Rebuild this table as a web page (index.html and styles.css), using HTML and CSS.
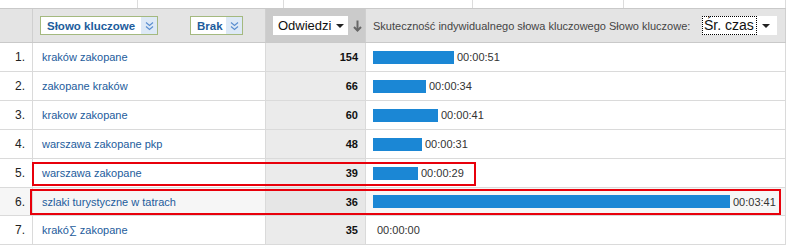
FILE: index.html
```html
<!DOCTYPE html>
<html lang="pl">
<head>
<meta charset="utf-8">
<link rel="stylesheet" href="styles.css">
</head>
<body>
<div class="wrap">
  <div class="topband">
    <div class="tb tb1"></div><div class="tb tb2"></div><div class="tb tb3"></div><div class="tb tb4"></div><div class="tb tb5"></div>
  </div>
  <div class="row head">
    <div class="cell num"></div>
    <div class="cell kw">
      <div class="dim dim1"><span class="dim-label">Słowo kluczowe</span><span class="dim-btn"><svg width="9" height="10" viewBox="0 0 9 10"><polyline points="1,1.5 4.5,4.5 8,1.5" fill="none" stroke="#5b8fd0" stroke-width="1.2"/><polyline points="1,5.5 4.5,8.5 8,5.5" fill="none" stroke="#5b8fd0" stroke-width="1.2"/></svg></span></div>
      <div class="dim dim2"><span class="dim-label">Brak</span><span class="dim-btn"><svg width="9" height="10" viewBox="0 0 9 10"><polyline points="1,1.5 4.5,4.5 8,1.5" fill="none" stroke="#5b8fd0" stroke-width="1.2"/><polyline points="1,5.5 4.5,8.5 8,5.5" fill="none" stroke="#5b8fd0" stroke-width="1.2"/></svg></span></div>
    </div>
    <div class="cell vis">
      <div class="sel sel-vis"><span>Odwiedzi</span><span class="caret"></span></div>
      <svg class="sortarrow" width="9" height="12" viewBox="0 0 9 12"><line x1="4.5" y1="0.5" x2="4.5" y2="10.5" stroke="#666" stroke-width="2"/><polyline points="1,7 4.5,10.5 8,7" fill="none" stroke="#666" stroke-width="2"/></svg>
    </div>
    <div class="cell met">
      <span class="met-title">Skuteczność indywidualnego słowa kluczowego Słowo kluczowe:</span>
      <div class="sel sel-met"><span class="focus">Śr. czas</span><span class="caret"></span></div>
    </div>
  </div>

  <div class="row">
    <div class="cell num">1.</div>
    <div class="cell kw"><a class="link">kraków zakopane</a></div>
    <div class="cell vis val">154</div>
    <div class="cell met"><span class="bar" style="width:81px"></span><span class="time">00:00:51</span></div>
  </div>
  <div class="row">
    <div class="cell num">2.</div>
    <div class="cell kw"><a class="link">zakopane kraków</a></div>
    <div class="cell vis val">66</div>
    <div class="cell met"><span class="bar" style="width:53px"></span><span class="time">00:00:34</span></div>
  </div>
  <div class="row">
    <div class="cell num">3.</div>
    <div class="cell kw"><a class="link">krakow zakopane</a></div>
    <div class="cell vis val">60</div>
    <div class="cell met"><span class="bar" style="width:65px"></span><span class="time">00:00:41</span></div>
  </div>
  <div class="row">
    <div class="cell num">4.</div>
    <div class="cell kw"><a class="link">warszawa zakopane pkp</a></div>
    <div class="cell vis val">48</div>
    <div class="cell met"><span class="bar" style="width:49px"></span><span class="time">00:00:31</span></div>
  </div>
  <div class="row">
    <div class="cell num">5.</div>
    <div class="cell kw"><a class="link">warszawa zakopane</a></div>
    <div class="cell vis val">39</div>
    <div class="cell met"><span class="bar" style="width:45px"></span><span class="time">00:00:29</span></div>
  </div>
  <div class="row hover short">
    <div class="cell num">6.</div>
    <div class="cell kw"><a class="link">szlaki turystyczne w tatrach</a></div>
    <div class="cell vis val">36</div>
    <div class="cell met"><span class="bar" style="width:357px"></span><span class="time">00:03:41</span></div>
  </div>
  <div class="row">
    <div class="cell num">7.</div>
    <div class="cell kw"><a class="link">krakó∑ zakopane</a></div>
    <div class="cell vis val">35</div>
    <div class="cell met"><span class="time nobar">00:00:00</span></div>
  </div>

  <div class="mark mark5"></div>
  <div class="mark mark6"></div>
</div>
</body>
</html>
```

FILE: styles.css
```css
* { box-sizing: border-box; }
html, body { margin: 0; padding: 0; background: #fff; }
body { font-family: Arial, "Liberation Sans", sans-serif; font-size: 11px; color: #222; }

.wrap { position: relative; width: 793px; height: 246px; overflow: hidden; }

.topband { display: flex; height: 8px; }
.tb { height: 8px; border-right: 1px solid #dcdcdc; }
.tb1 { width: 138px; }
.tb2 { width: 146px; }
.tb3 { width: 189px; }
.tb4 { width: 151px; }
.tb5 { width: 162px; }

.row {
  display: grid;
  grid-template-columns: 33px 233px 100px 420px;
  width: 786px;
  height: 29px;
  border-bottom: 1px solid #dadada;
}
.row.short { height: 28px; }
.row.head { height: 35px; border-top: 1px solid #c9c9c9; border-bottom: 1px solid #c9c9c9; background: #e4e4e4; }

.cell { border-right: 1px solid #dadada; display: flex; align-items: center; min-width: 0; white-space: nowrap; }
.head .cell { border-right-color: #cfcfcf; }

.num { justify-content: flex-end; padding-right: 7px; font-size: 12px; color: #222; }
.kw { padding-left: 9px; }
.link { color: #1d5c9c; font-size: 11px; text-decoration: none; }
.vis { background: #ebebeb; }
.val { justify-content: flex-end; padding-right: 7px; font-weight: bold; color: #111; }
.met { padding-left: 7px; }
.hover .cell { background: #f6f6f6; }
.hover .vis { background: #e6e6e6; }

.bar { display: inline-block; height: 13px; background: #1b87d5; flex: none; }
.time { margin-left: 3px; color: #333; font-size: 11px; }
.time.nobar { margin-left: 4px; }

/* header */
.head .kw { padding-left: 7px; }
.dim { display: flex; align-items: stretch; height: 19px; border: 1px solid #a4b97f; background: #fff; }
.dim1 { width: 118px; }
.dim2 { width: 53px; margin-left: 32px; }
.dim-label { flex: 1; display: flex; align-items: center; padding-left: 6px; font-weight: bold; color: #1d5c9c; font-size: 11.5px; }
.dim-btn { width: 16px; background: #dde9f6; display: flex; align-items: center; justify-content: center; }

.head .vis { background: #cbcbcb; padding-left: 7px; }
.sel { display: flex; align-items: center; background: #fff; height: 19px; }
.sel-vis { width: 75px; padding-left: 5px; font-size: 13px; color: #111; }
.caret { width: 0; height: 0; border-left: 4px solid transparent; border-right: 4px solid transparent; border-top: 4px solid #222; margin-left: 5px; }
.sortarrow { margin-left: 5px; }

.met-title { color: #444; font-size: 11px; }
.sel-met { margin-left: auto; margin-right: 8px; width: 75px; padding-left: 1px; font-size: 14px; color: #111; }
.sel-met .focus { outline: 1px dotted #000; padding: 0 2px 0 1px; line-height: 17px; }
.sel-met .caret { margin-left: 6px; }

/* annotation boxes */
.mark { position: absolute; border: 2px solid #e8000b; }
.mark5 { left: 32px; top: 162px; width: 444px; height: 24px; }
.mark6 { left: 30px; top: 189px; width: 751px; height: 26px; }
```
